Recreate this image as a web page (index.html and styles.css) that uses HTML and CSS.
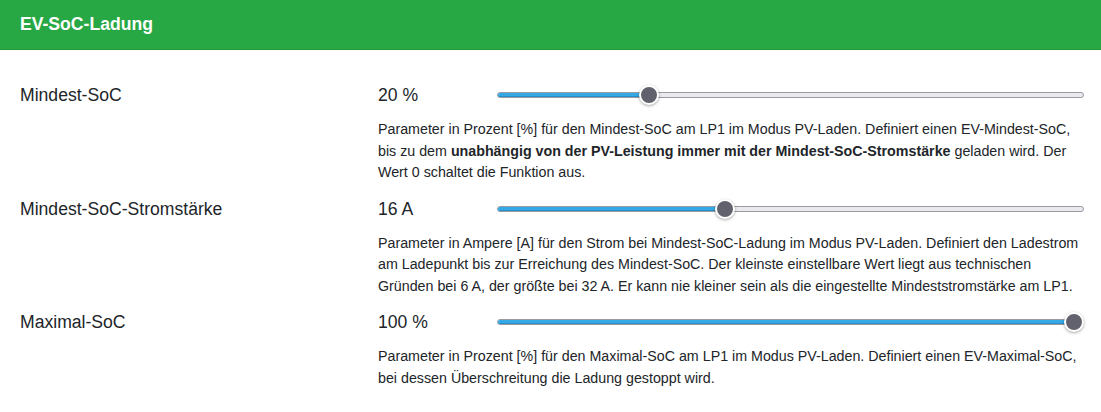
FILE: index.html
```html
<!DOCTYPE html>
<html lang="de">
<head>
<meta charset="utf-8">
<title>EV-SoC-Ladung</title>
<link rel="stylesheet" href="styles.css">
</head>
<body>
<div class="card">
  <div class="card-header">EV-SoC-Ladung</div>
  <div class="card-body">
    <div class="form-row">
      <div class="label">Mindest-SoC</div>
      <div class="control">
        <div class="value">20 %</div>
        <div class="slider"><div class="track"><div class="fill" style="width:25%"></div></div><div class="thumb-rail"><div class="thumb" style="left:25%"></div></div></div>
      </div>
      <div class="help">Parameter in Prozent [%] für den Mindest-SoC am LP1 im Modus PV-Laden. Definiert einen EV-Mindest-SoC, bis zu dem <b>unabhängig von der PV-Leistung immer mit der Mindest-SoC-Stromstärke</b> geladen wird. Der Wert 0 schaltet die Funktion aus.</div>
    </div>
    <div class="form-row">
      <div class="label">Mindest-SoC-Stromstärke</div>
      <div class="control">
        <div class="value">16 A</div>
        <div class="slider"><div class="track"><div class="fill" style="width:38.46%"></div></div><div class="thumb-rail"><div class="thumb" style="left:38.46%"></div></div></div>
      </div>
      <div class="help">Parameter in Ampere [A] für den Strom bei Mindest-SoC-Ladung im Modus PV-Laden. Definiert den Ladestrom am Ladepunkt bis zur Erreichung des Mindest-SoC. Der kleinste einstellbare Wert liegt aus technischen Gründen bei 6 A, der größte bei 32 A. Er kann nie kleiner sein als die eingestellte Mindeststromstärke am LP1.</div>
    </div>
    <div class="form-row">
      <div class="label">Maximal-SoC</div>
      <div class="control">
        <div class="value">100 %</div>
        <div class="slider"><div class="track"><div class="fill" style="width:100%"></div></div><div class="thumb-rail"><div class="thumb" style="left:100%"></div></div></div>
      </div>
      <div class="help">Parameter in Prozent [%] für den Maximal-SoC am LP1 im Modus PV-Laden. Definiert einen EV-Maximal-SoC, bei dessen Überschreitung die Ladung gestoppt wird.</div>
    </div>
  </div>
</div>
</body>
</html>
```

FILE: styles.css
```css
html, body {
  margin: 0;
  padding: 0;
  background: #ffffff;
}
body {
  font-family: "Liberation Sans", Arial, sans-serif;
  color: #212529;
}
.card-header {
  height: 50px;
  box-sizing: border-box;
  background: #28a745;
  border-bottom: 1px solid #23963e;
  color: #ffffff;
  font-weight: bold;
  font-size: 17.6px;
  line-height: 49px;
  padding: 0 20px;
}
.card-body {
  padding: 32px 17px 0 20px;
}
.form-row {
  display: grid;
  grid-template-columns: 358px 1fr;
  row-gap: 11px;
  margin-bottom: 12px;
}
.label {
  font-size: 17.6px;
  line-height: 26px;
}
.control {
  display: flex;
  align-items: center;
  height: 26px;
}
.value {
  width: 119px;
  flex: none;
  font-size: 17.6px;
  line-height: 26px;
}
.slider {
  flex: 1;
  position: relative;
  height: 20px;
}
.track {
  position: absolute;
  left: 0;
  right: 0;
  top: 7px;
  height: 6px;
  box-sizing: border-box;
  background: #e9e9ee;
  border: 1px solid #9a9aa3;
  border-radius: 3px;
  overflow: hidden;
}
.fill {
  height: 100%;
  background: #35a9e6;
  box-shadow: inset 0 -1px 0 #2790c8;
}
.thumb-rail {
  position: absolute;
  left: 10px;
  right: 10px;
  top: 0;
  height: 20px;
}
.thumb {
  position: absolute;
  top: 0;
  width: 20px;
  height: 20px;
  margin-left: -10px;
  box-sizing: border-box;
  border-radius: 50%;
  background: #62626f;
  border: 2px solid #ffffff;
  box-shadow: 0 1px 3px rgba(0,0,0,0.35);
}
.help {
  grid-column: 2;
  margin-right: -6px;
  font-size: 14.25px;
  line-height: 21.5px;
}
.help b {
  font-weight: bold;
}
```
